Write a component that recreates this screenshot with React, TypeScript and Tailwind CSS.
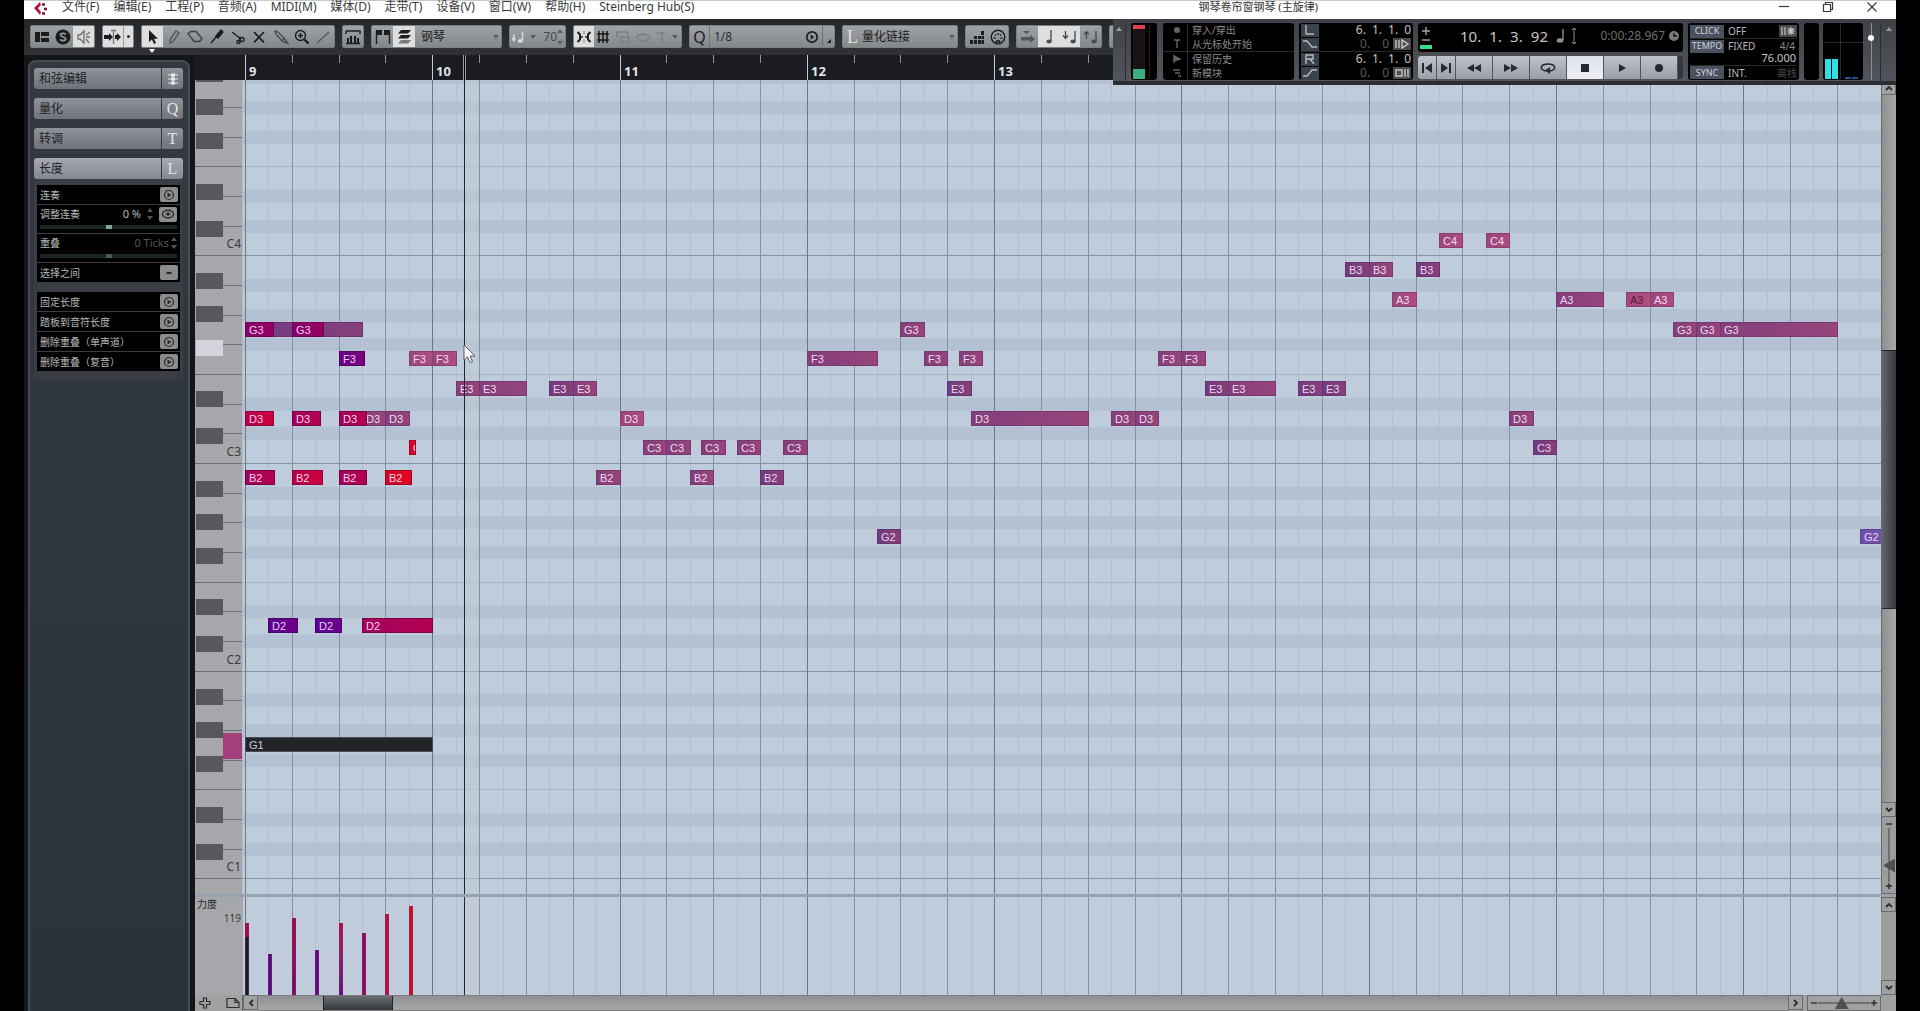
import type { ReactNode } from "react";
import { clsx } from "clsx";

const MENU = [
  "文件(F)",
  "编辑(E)",
  "工程(P)",
  "音频(A)",
  "MIDI(M)",
  "媒体(D)",
  "走带(T)",
  "设备(V)",
  "窗口(W)",
  "帮助(H)",
  "Steinberg Hub(S)",
];

// Horizontal scale: one step is an eighth note, eight steps per bar.
const STEP = 23.41;
const ORIGIN = 2;
const STEPS = 160;

// Bars after this one have no number, the transport panel covers them.
const LAST_LABEL = 13;

// Vertical scale: one row per white key, seven rows per octave.
const ROW = 29.67;
const OCTAVE = ROW * 7;
const ROLL_TOP = -32.4;
const OCTAVES = [0, 1, 2, 3, 4, 5, 6, 7];
const PLAYHEAD = 221;

const stepX = (step: number) => Math.round(ORIGIN + step * STEP);

type Tone =
  | "plum"
  | "mauve"
  | "rose"
  | "muted"
  | "iris"
  | "magenta"
  | "crimson"
  | "wine"
  | "red"
  | "violet"
  | "indigo"
  | "selected";

const TONES: Record<Tone, string> = {
  plum: "from-[#6f3c82] to-[#873f7a] border-[#6b3270] text-[#ead3ea]",
  mauve: "from-[#833f7c] to-[#97447c] border-[#78376d] text-[#f0dbec]",
  rose: "from-[#9a467e] to-[#ad4c80] border-[#8c3f6e] text-[#f4dcea]",
  muted: "from-[#a5487c] to-[#b14f80] border-[#8c3f6e] text-[#5a1c3c]",
  iris: "from-[#6c4fb0] to-[#7a51a8] border-[#5f4192] text-[#e2d8f4]",
  magenta: "from-[#86006c] to-[#960062] border-[#760058] text-[#f2cfe6]",
  crimson: "from-[#b8004c] to-[#cc003c] border-[#93003a] text-[#ffd6e2]",
  wine: "from-[#a2005e] to-[#b40050] border-[#7d0047] text-[#ffd6ea]",
  red: "from-[#d4042c] to-[#e00420] border-[#a80020] text-[#ffd6da]",
  violet: "from-[#66008a] to-[#7a007a] border-[#560068] text-[#eccdf2]",
  indigo: "from-[#5c0090] to-[#6c0086] border-[#4a006e] text-[#e4cdf5]",
  selected: "from-[#22242a] to-[#22242a] border-[#484c56] text-[#c9cbd0]",
};

// [pitch, start step, length in steps, tone]
const NOTES: [string, number, number, Tone][] = [
  ["", 0, 5, "plum"],
  ["G3", 0, 1.2, "magenta"],
  ["G3", 2, 1.33, "magenta"],
  ["F3", 4, 1.07, "violet"],
  ["D3", 0, 1.2, "crimson"],
  ["D3", 2, 1.22, "wine"],
  ["D3", 5, 1, "mauve"],
  ["D3", 6, 1, "mauve"],
  ["D3", 4, 1.17, "wine"],
  ["C3", 7, 0.28, "red"],
  ["B2", 0, 1.23, "wine"],
  ["B2", 2, 1.3, "crimson"],
  ["B2", 4, 1.18, "wine"],
  ["B2", 6, 1.1, "red"],
  ["D2", 1, 1.2, "indigo"],
  ["D2", 3, 1.1, "indigo"],
  ["D2", 5, 3, "wine"],
  ["G1", 0, 8, "selected"],
  ["F3", 7, 1, "rose"],
  ["F3", 8, 1, "rose"],
  ["E3", 9, 1, "mauve"],
  ["E3", 10, 2, "mauve"],
  ["E3", 13, 1, "plum"],
  ["E3", 14, 1, "mauve"],
  ["B2", 15, 1, "mauve"],
  ["D3", 16, 1, "rose"],
  ["C3", 17, 1, "mauve"],
  ["C3", 18, 1, "mauve"],
  ["B2", 19, 1, "mauve"],
  ["C3", 19.5, 1, "mauve"],
  ["C3", 21, 1, "mauve"],
  ["B2", 22, 1, "plum"],
  ["C3", 23, 1, "mauve"],
  ["F3", 24, 3, "mauve"],
  ["G2", 27, 1, "plum"],
  ["G3", 28, 1, "mauve"],
  ["F3", 29, 1, "mauve"],
  ["E3", 30, 1, "plum"],
  ["F3", 30.5, 1, "mauve"],
  ["D3", 31, 5, "mauve"],
  ["D3", 37, 1, "mauve"],
  ["D3", 38, 1, "mauve"],
  ["F3", 39, 1, "mauve"],
  ["F3", 40, 1, "mauve"],
  ["E3", 41, 1, "plum"],
  ["E3", 42, 2, "mauve"],
  ["E3", 45, 1, "plum"],
  ["E3", 46, 1, "plum"],
  ["B3", 47, 1, "plum"],
  ["B3", 48, 1, "mauve"],
  ["A3", 49, 1, "rose"],
  ["B3", 50, 1, "plum"],
  ["C4", 51, 1, "rose"],
  ["C4", 53, 1, "rose"],
  ["D3", 54, 1, "mauve"],
  ["C3", 55, 1, "plum"],
  ["A3", 56, 2, "mauve"],
  ["A3", 59, 1, "muted"],
  ["A3", 60, 1, "rose"],
  ["G3", 61, 1, "mauve"],
  ["G3", 62, 1, "mauve"],
  ["G3", 63, 5, "mauve"],
  ["G2", 69, 1, "iris"],
];

function noteY(pitch: string) {
  const name = pitch ? pitch : "G3";
  const row = "BAGFEDC".indexOf(name[0]) + (4 - Number(name[1])) * 7;
  return Math.round(ROLL_TOP + row * ROW + 7);
}

const VELOCITIES = [
  { step: 0, height: 72, fill: "from-[#b8003f] from-20% to-[#1c1626] to-20%" },
  { step: 1, height: 41, fill: "from-[#62008c] to-[#62008c]" },
  { step: 2, height: 77, fill: "from-[#b2004c] to-[#850068]" },
  { step: 3, height: 45, fill: "from-[#700083] to-[#700083]" },
  { step: 4, height: 72, fill: "from-[#c4003c] to-[#700083]" },
  { step: 5, height: 62, fill: "from-[#a0005a] to-[#a0005a]" },
  { step: 6, height: 81, fill: "from-[#cc0a3e] to-[#cc0a3e]" },
  { step: 7, height: 89, fill: "from-[#e0061c] to-[#e0061c]" },
];

function Icon({ children, className, box = "0 0 16 16" }: { children: ReactNode; className?: string; box?: string }) {
  return (
    <svg
      viewBox={box}
      aria-hidden="true"
      className={clsx("shrink-0", className ?? "size-4")}
      fill="none"
      stroke="currentColor"
      strokeWidth="1.4"
    >
      {children}
    </svg>
  );
}

function Tool({ label, lit, dim, children }: { label: string; lit?: boolean; dim?: boolean; children: ReactNode }) {
  return (
    <button
      type="button"
      aria-label={label}
      className={clsx(
        "flex h-full min-w-0 flex-1 items-center justify-center",
        lit && "bg-[#dcdedf]",
        dim ? "text-[#7c7f81]" : "text-[#1b1c1e]",
      )}
    >
      {children}
    </button>
  );
}

function Group({ className, children }: { className: string; children?: ReactNode }) {
  return (
    <div
      className={clsx(
        "flex h-[23px] shrink-0 items-center overflow-hidden rounded-[2px] border border-[#7d8082] bg-linear-to-b from-[#a0a3a5] to-[#85888a] text-[#1b1c1e]",
        className,
      )}
    >
      {children}
    </div>
  );
}

function Caret({ up, className }: { up?: boolean; className?: string }) {
  return (
    <svg viewBox="0 0 6 4" aria-hidden="true" className={clsx("h-1 w-1.5 shrink-0", className)} fill="currentColor">
      <path d={up ? "M0 4h6L3 0z" : "M0 0h6L3 4z"} />
    </svg>
  );
}

function TitleBar() {
  return (
    <header className="flex h-[19px] shrink-0 items-start border-t border-[#c9c9c9] bg-white pl-[9px] pr-0.5 text-xs leading-4 text-[#3a3a3a]">
      <Icon className="h-4 w-[15px]" box="0 0 15 16">
        <path d="M1 7 7 1 8 4 5 7 8 11 7 14z" fill="#b0183f" stroke="none" />
        <path d="M9 3.5h3M11 8h3M9 12.5h3" stroke="#7c1430" strokeWidth="2.4" />
      </Icon>
      <nav className="-mt-0.5 ml-3.5 flex gap-3.5">
        {MENU.map((item) => (
          <button key={item} type="button" className="whitespace-nowrap">
            {item}
          </button>
        ))}
      </nav>
      <h1 className="-mt-0.5 min-w-0 flex-1 pl-[60px] text-center text-[11px] leading-4 text-[#333]">
        钢琴卷帘窗钢琴 (主旋律)
      </h1>
      <button type="button" aria-label="最小化" className="flex w-11 justify-center">
        <Icon className="size-3" box="0 0 12 12">
          <path d="M1 5.500h10" strokeWidth="1.200" />
        </Icon>
      </button>
      <button type="button" aria-label="还原" className="flex w-11 justify-center">
        <Icon className="size-3" box="0 0 12 12">
          <path d="M1.500 3.500h7v7h-7zM3.500 3.500v-2h7v7h-2" strokeWidth="1.200" />
        </Icon>
      </button>
      <button type="button" aria-label="关闭" className="flex w-11 justify-center">
        <Icon className="size-3" box="0 0 12 12">
          <path d="m1.500 1.500 9 9m0-9-9 9" strokeWidth="1.200" />
        </Icon>
      </button>
    </header>
  );
}

function Toolbar() {
  return (
    <div className="flex h-9 shrink-0 items-start gap-[7px] overflow-hidden bg-linear-to-b from-[#24272a] to-[#303236] pl-1.5 pt-1.5">
      <Group className="w-[65px]">
        <Tool label="窗口布局">
          <Icon className="h-3 w-4" box="0 0 16 12">
            <path d="M1 1h5v10H1zM7 1h8v4H7zM7 7h8v4H7z" fill="currentColor" stroke="none" />
          </Icon>
        </Tool>
        <Tool label="独奏编辑器">
          <Icon>
            <circle cx="8" cy="8" r="7.500" fill="currentColor" stroke="none" />
            <path d="M10.800 5.500C10 4 5.500 3.900 5.500 6.100c0 2.300 5.200 1.400 5.200 3.900 0 2.200-4.900 2.100-5.500.3" stroke="#94979a" strokeWidth="1.700" />
          </Icon>
        </Tool>
        <Tool label="听觉反馈" lit>
          <Icon>
            <path d="M2 6h2l4-4v12L4 10H2zM10 6l4-3M10 8h4M10 10l3 4" stroke="#707376" />
          </Icon>
        </Tool>
      </Group>

      <Group className="w-8">
        <Tool label="自动滚动" lit>
          <Icon className="h-4 w-[18px]" box="0 0 18 16">
            <path d="M0 6h5V4l4 4-4 4v-2H0zM11 6h2V4l4 4-4 4v-2h-2z" fill="currentColor" stroke="none" />
            <path d="M9.500 1v14M7 1.500h5" stroke="#77797c" />
          </Icon>
        </Tool>
        <button type="button" aria-label="滚动选项" className="flex h-full w-2.5 items-center justify-center border-l border-[#9a9c9e] bg-[#dcdedf]">
          <span className="size-[3px] rounded-full bg-[#333]" />
        </button>
      </Group>

      <div className="flex shrink-0 flex-col">
        <Group className="w-[194px]">
          <Tool label="选择" lit>
            <Icon>
              <path d="M4 1v12l3-2.500L9 15l2-1-2-4.200h4z" fill="currentColor" stroke="none" />
            </Icon>
          </Tool>
          <Tool label="绘制">
            <Icon>
              <path d="m4 14 .5-4L10 2l3 2-6 8.500z" stroke="#55585a" />
            </Icon>
          </Tool>
          <Tool label="擦除">
            <Icon>
              <path d="M1 4.500 4 2.500h5l6 7-2.500 3H7z" stroke="#3c3f41" />
            </Icon>
          </Tool>
          <Tool label="修剪">
            <Icon>
              <path d="m2 14 6-7" />
              <path d="m7 7 5-6 2 2-5 6z" fill="currentColor" />
            </Icon>
          </Tool>
          <Tool label="分割">
            <Icon>
              <path d="m2 3 9 7M9 13l1.500-5" />
              <circle cx="12" cy="10.500" r="2" />
              <circle cx="8.500" cy="13" r="1.600" />
            </Icon>
          </Tool>
          <Tool label="静音">
            <Icon>
              <path d="m3 3 10 10.500M13 3 3 13.500" strokeWidth="1.800" />
            </Icon>
          </Tool>
          <Tool label="胶合">
            <Icon>
              <path d="m2 2 3 1 6 6-2 3-6-7zM11 9l4 5.500L9 12" stroke="#4b4e50" />
            </Icon>
          </Tool>
          <Tool label="缩放">
            <Icon>
              <circle cx="6.500" cy="6.500" r="5" />
              <path d="M4 6.500h5M6.500 4v5" />
              <path d="m10.500 10.500 4 4" strokeWidth="2.400" />
            </Icon>
          </Tool>
          <Tool label="线条">
            <Icon>
              <path d="M2 14 14 3" stroke="#55585a" />
            </Icon>
          </Tool>
        </Group>
        <Caret className="ml-2 mt-px text-white" />
      </div>

      <Group className="w-[22px]">
        <Tool label="控制器">
          <Icon>
            <path d="M1 2h14v3" />
            <path d="M1 2v3" />
            <path d="M2 14V9h2v5zM5 14V7h2v7zM9 14V7h2v7zM12 14V9h2v5z" fill="currentColor" stroke="none" />
            <path d="M1 14.500h14" />
          </Icon>
        </Tool>
      </Group>

      <Group className="w-[131px]">
        <button type="button" aria-label="显示片段边界" className="flex h-full w-[21px] items-center justify-center">
          <Icon>
            <path d="M1.500 15V2M14.500 15V2" />
            <path d="M1 1h6v5H1zM9 1h6v5H9z" fill="currentColor" stroke="none" />
          </Icon>
        </button>
        <button type="button" aria-label="编辑激活片段" className="flex h-full w-[22px] items-center justify-center bg-[#dcdedf]">
          <Icon>
            <path d="M5 1h10l-3 3.500H2zM5 6h10l-3 3.500H2z" fill="currentColor" stroke="none" />
            <path d="M5 11h10l-3 3.500H2z" fill="#77797c" stroke="none" />
          </Icon>
        </button>
        <select aria-label="当前片段" className="h-full min-w-0 flex-1 appearance-none pl-1.5 text-xs">
          <option>钢琴</option>
        </select>
        <Caret className="mr-0.5 text-[#5d6062]" />
      </Group>

      <Group className="w-[57px]">
        <Icon className="ml-0.5 h-4 w-3.5">
          <path d="M2 5v6M0 9l2 3 2-3M12 2v10" stroke="#d6d8d9" strokeWidth="1.800" />
          <ellipse cx="9.500" cy="12.500" rx="3" ry="2.200" fill="#d6d8d9" stroke="none" />
        </Icon>
        <Caret className="ml-1 text-[#5d6062]" />
        <input
          aria-label="插入力度"
          defaultValue="70"
          className="h-full w-0 min-w-0 flex-1 text-right text-xs text-[#44474a]"
        />
        <span className="mr-0.5 flex flex-col gap-2 text-[#5d6062]">
          <Caret up />
          <Caret />
        </span>
      </Group>

      <Group className="w-[109px]">
        <Tool label="吸附" lit>
          <Icon>
            <path d="M1.500 3 4 5.500v5L1.500 13M14.500 3 12 5.500v5l2.500 2.500" strokeWidth="2" />
            <path d="M4 8h3M9 8h3" />
            <path d="M8 2v4M8 10v4" stroke="#999" />
          </Icon>
        </Tool>
        <Tool label="网格">
          <Icon>
            <path d="M2 5h12M2 11h12M4 2v12M8 2v12M12 2v12" strokeWidth="1.600" />
          </Icon>
        </Tool>
        <Tool label="事件" dim>
          <Icon>
            <path d="M2 9V3h11v5M6 8h8v5H6z" />
          </Icon>
        </Tool>
        <Tool label="交换" dim>
          <Icon>
            <path d="M1 9c2-5 12-5 14 0M2 9l3 3h6l3-3" />
          </Icon>
        </Tool>
        <Tool label="光标" dim>
          <Icon>
            <path d="M3 4h8M8 4v10" />
          </Icon>
        </Tool>
        <Caret className="mr-[3px] text-[#5d6062]" />
      </Group>

      <Group className="w-[146px]">
        <button type="button" aria-label="应用量化" className="flex h-full w-5 items-center justify-center border-r border-[#6f7274]">
          <span className="text-base leading-5">Q</span>
        </button>
        <select aria-label="量化预置" className="h-full min-w-0 flex-1 appearance-none pl-1 text-xs text-[#2c2e30]">
          <option>1/8</option>
        </select>
        <button type="button" aria-label="迭代量化" className="flex h-full w-5 items-center justify-center">
          <Icon className="size-3.5">
            <circle cx="8" cy="8" r="6" strokeWidth="2" />
            <path d="m6.500 5 4 3-4 3z" fill="currentColor" stroke="none" />
          </Icon>
        </button>
        <span className="flex h-full w-3 items-end justify-center border-l border-[#6f7274] pb-1">
          <Icon className="size-1" box="0 0 4 4">
            <path d="M4 0v4H0z" fill="currentColor" stroke="none" />
          </Icon>
        </span>
      </Group>

      <Group className="w-[116px]">
        <span className="w-[18px] pl-1 font-[Liberation_Serif,serif] text-lg leading-5 text-[#e2e4e5]">L</span>
        <select aria-label="长度量化" className="h-full min-w-0 flex-1 appearance-none pl-px text-xs">
          <option>量化链接</option>
        </select>
        <Caret className="mr-0.5 text-[#5d6062]" />
      </Group>

      <Group className="w-11">
        <Tool label="步进输入">
          <Icon>
            <path d="M1 11h3v4H1zM5 11h3v4H5zM9 11h3v4H9zM5 7h3v3H5zM9 7h3v3H9zM12.500 11H15v4h-2.500zM12.500 7H15v3h-2.500zM12 2h3v4h-3z" fill="currentColor" stroke="none" />
          </Icon>
        </Tool>
        <Tool label="MIDI 输入">
          <Icon>
            <circle cx="8" cy="8" r="6.800" />
            <path d="M3.500 9h2M5 5.500l1 1M8 4v2M11 5.500l-1 1M10.500 9h2M6.500 14v-2h3v2" />
          </Icon>
        </Tool>
      </Group>

      <Group className="w-[86px]">
        <Tool label="移动插入光标">
          <Icon className="size-4 text-[#55585a]">
            <path d="M3 2h7L6.500 5z" fill="currentColor" stroke="none" />
            <path d="M1 8h9V5.500L15 10l-5 4v-2.500H1z" fill="currentColor" stroke="none" />
          </Icon>
        </Tool>
        {["录制音高", "录制音符开力度", "录制音符关力度"].map((label, i) => (
          <Tool key={label} label={label} lit={i < 2}>
            <Icon className="size-4 text-[#4b4e50]">
              {i === 1 && <path d="M3.500 2v7M1 6.500l2.500 3 2.500-3" />}
              {i === 2 && <path d="M3.500 10V3M1 5.500l2.500-3 2.500 3" />}
              <path d={i === 0 ? "M10 1v11" : "M13 2v11"} />
              <ellipse cx={i === 0 ? 8 : 11} cy="12.500" rx="2.600" ry="2" fill="currentColor" stroke="none" />
            </Icon>
          </Tool>
        ))}
      </Group>

      <Group className="w-16" />
    </div>
  );
}

function TransportBox({ className, children }: { className: string; children?: ReactNode }) {
  return <div className={clsx("shrink-0 rounded-[3px] bg-black", className)}>{children}</div>;
}

function ModeRow({ text, children }: { text: string; children: ReactNode }) {
  return (
    <button type="button" className="flex h-3.5 items-center text-[10px] leading-3.5 text-[#8b8b8b]">
      <Icon className="mx-1 size-3 text-[#666]" box="0 0 12 12">
        {children}
      </Icon>
      <span className="border-l border-[#2a2a2a] pl-1">{text}</span>
    </button>
  );
}

function Locator({ label, values, dim, icon, children }: { label: string; values: string[]; dim?: boolean; icon?: ReactNode; children: ReactNode }) {
  return (
    <div className="flex h-3.5 items-center">
      <button type="button" aria-label={label} className="flex h-[13px] w-[18px] items-center justify-center bg-[#3b424c] text-[#b3bac2]">
        {children}
      </button>
      <div
        className={clsx(
          "ml-auto flex justify-end text-xs leading-3.5",
          dim ? "gap-3 text-[#5c5c5c]" : "gap-1.5 text-[#c4c4c4]",
        )}
      >
        {values.map((value, i) => (
          <span key={i}>{value}</span>
        ))}
      </div>
      {icon}
    </div>
  );
}

function PrerollToggle({ label, d }: { label: string; d: string }) {
  return (
    <button
      type="button"
      aria-label={label}
      className="ml-1 flex h-3 w-[18px] shrink-0 items-center justify-center bg-[#4a4a4e] text-[#c8c8c8]"
    >
      <Icon className="h-2.5 w-4" box="0 0 16 10">
        <path d={d} />
      </Icon>
    </button>
  );
}

function TransportButton({ label, wide, lit, children }: { label: string; wide?: boolean; lit?: boolean; children: ReactNode }) {
  return (
    <button
      type="button"
      aria-label={label}
      className={clsx(
        "flex h-[23px] items-center justify-center border-r border-[#50555c] bg-linear-to-b text-[#26292f]",
        wide ? "w-[37px]" : "w-[19px]",
        lit ? "from-[#dfe2ea] to-[#eef0f6]" : "from-[#bfc3ca] to-[#9a9fa8]",
      )}
    >
      {children}
    </button>
  );
}

function TransportPanel() {
  const tag = "flex h-[13px] w-[34px] items-center justify-center bg-[#4b5160] text-[9px] leading-3 text-[#d0d3da]";
  return (
    <section
      aria-label="走带面板"
      className="absolute right-0 top-[19px] flex h-[66px] w-[783px] items-start border-b-4 border-[#2b2f33] bg-linear-to-b from-[#3e4145] to-[#52565c] pt-1"
    >
      <div className="flex h-[58px] w-[13px] justify-center border-r border-[#2a2c2f] pt-1">
        <Caret up className="text-[#9a9ea3]" />
      </div>

      <TransportBox className="ml-[5px] flex h-[57px] w-[26px] items-stretch gap-1 px-0.5 pb-px pt-0.5">
        <div className="flex w-3 flex-col justify-between bg-[#191313]">
          <span className="h-1 bg-[#e0404c]" />
          <span className="h-2.5 bg-[#3cae80]" />
        </div>
        <span className="w-px bg-[#222]" />
      </TransportBox>

      <TransportBox className="ml-1.5 flex h-[57px] w-[131px] flex-col">
        <div className="flex flex-col border-b border-[#2a2a2a] px-1">
          <ModeRow text="穿入/穿出">
            <circle cx="6" cy="6" r="3" fill="currentColor" stroke="none" />
          </ModeRow>
          <ModeRow text="从光标处开始">
            <path d="M3 2h6M6 2v8" />
          </ModeRow>
        </div>
        <div className="flex flex-col px-1">
          <ModeRow text="保留历史">
            <path d="M3 2v8M3 3l6 3-6 2z" fill="currentColor" />
          </ModeRow>
          <ModeRow text="新模块">
            <path d="M2 3h7M4 6h5M7 9h3" />
          </ModeRow>
        </div>
      </TransportBox>

      <TransportBox className="ml-[5px] flex h-[57px] w-[114px] flex-col px-0.5">
        <Locator label="左定位点" values={["6.", "1.", "1.", "0"]}>
          <Icon className="h-2.5 w-3" box="0 0 12 10">
            <path d="M2 0v9h8" />
          </Icon>
        </Locator>
        <Locator label="预卷" values={["0.", "0"]} dim icon={<PrerollToggle label="使用预卷" d="M2 1v8M5 1v8M8 1l6 4-6 4z" />}>
          <Icon className="h-2.5 w-3.5" box="0 0 14 10">
            <path d="M0 2h4l5 6h5" />
          </Icon>
        </Locator>
        <div className="border-t border-[#2a2a2a]">
          <Locator label="右定位点" values={["6.", "1.", "1.", "0"]}>
            <Icon className="h-2.5 w-3" box="0 0 12 10">
              <path d="M2 10V1h7v4H2M6 5l4 5" />
            </Icon>
          </Locator>
          <Locator label="后卷" values={["0.", "0"]} dim icon={<PrerollToggle label="使用后卷" d="M2 2h6v6H2zM11 1v8M14 1v8" />}>
            <Icon className="h-2.5 w-3.5" box="0 0 14 10">
              <path d="M0 8h4l5-6h5" />
            </Icon>
          </Locator>
        </div>
      </TransportBox>

      <div className="ml-[5px] w-[265px] shrink-0">
        <div className="flex h-[29px] items-center rounded-[3px] bg-black pl-0.5 pr-1 text-[#c6c6c6]">
          <div className="flex w-3 flex-col items-center gap-px text-[#a5a5a5]">
            <Icon className="size-2" box="0 0 8 8">
              <path d="M0 4h8M4 0v8" />
            </Icon>
            <Icon className="size-2" box="0 0 8 8">
              <path d="M0 4h8" />
            </Icon>
            <span className="h-1 w-3 bg-[#35dd8e]" />
          </div>
          <div className="-mt-1 ml-7 flex w-[88px] justify-between text-[15px] leading-5">
            <span>10.</span>
            <span>1.</span>
            <span>3.</span>
            <span>92</span>
          </div>
          <Icon className="-mt-1 ml-1.5 h-4 w-3 text-[#8f8f8f]" box="0 0 12 16">
            <path d="M9 1v11" />
            <ellipse cx="6" cy="12.500" rx="3.300" ry="2.200" fill="currentColor" stroke="none" />
          </Icon>
          <Icon className="-mt-1 ml-1 h-[18px] w-2 text-[#8f8f8f]" box="0 0 8 18">
            <path d="M4 2v14M2 3l2-2 2 2M2 15l2 2 2-2" strokeWidth="1" />
          </Icon>
          <span className="-mt-1 ml-auto text-xs leading-4 text-[#6e6e6e]">0:00:28.967</span>
          <Icon className="-mt-1 ml-1 size-2.5 text-[#7c7c7c]" box="0 0 10 10">
            <circle cx="5" cy="5" r="5" fill="currentColor" stroke="none" />
            <path d="M5 2v3h3" stroke="#111" />
          </Icon>
        </div>
        <div className="mt-1 flex overflow-hidden rounded-[3px] bg-[#33373d]">
          <TransportButton label="到开头">
            <Icon className="h-3 w-3.5" box="0 0 14 12">
              <path d="M3 1v10" strokeWidth="2" />
              <path d="M12 1v10L5 6z" fill="currentColor" stroke="none" />
            </Icon>
          </TransportButton>
          <TransportButton label="到结尾">
            <Icon className="h-3 w-3.5" box="0 0 14 12">
              <path d="M11 1v10" strokeWidth="2" />
              <path d="M2 1v10l7-5z" fill="currentColor" stroke="none" />
            </Icon>
          </TransportButton>
          <TransportButton label="后退" wide>
            <Icon className="h-3 w-4" box="0 0 16 12">
              <path d="M8 2v8L1 6zM15 2v8L8 6z" fill="currentColor" stroke="none" />
            </Icon>
          </TransportButton>
          <TransportButton label="前进" wide>
            <Icon className="h-3 w-4" box="0 0 16 12">
              <path d="M1 2v8l7-4zM8 2v8l7-4z" fill="currentColor" stroke="none" />
            </Icon>
          </TransportButton>
          <TransportButton label="循环" wide>
            <Icon className="h-3 w-4" box="0 0 16 12">
              <path d="M6 9C-1 8 0 2 8 2s9 6 2 7" strokeWidth="1.600" />
              <path d="m10 5-5 3.500L10 12z" fill="currentColor" stroke="none" />
            </Icon>
          </TransportButton>
          <TransportButton label="停止" wide lit>
            <span className="size-2 bg-[#26292f]" />
          </TransportButton>
          <TransportButton label="播放" wide>
            <Icon className="h-3 w-2" box="0 0 8 12">
              <path d="M1 2v8l7-4z" fill="currentColor" stroke="none" />
            </Icon>
          </TransportButton>
          <TransportButton label="录音" wide>
            <span className="size-2 rounded-full bg-[#26292f]" />
          </TransportButton>
        </div>
      </div>

      <TransportBox className="ml-[5px] flex h-[57px] w-[111px] flex-col px-0.5 pb-px pt-px text-[10px] leading-3.5 text-[#b9b9b9]">
        <div className="flex h-4 items-center border-b border-[#2a2a2a]">
          <button type="button" className={tag}>
            CLICK
          </button>
          <span className="ml-1">OFF</span>
          <span className="ml-auto flex h-3 w-[18px] items-center justify-center bg-[#4a4a4e] text-[#c8c8c8]">
            <Icon className="h-2.5 w-4" box="0 0 16 10">
              <path d="M2 1v8M5 1v8M11 1v8M7 5h8M8 2l6 6M14 2 8 8" strokeWidth="1.200" />
            </Icon>
          </span>
        </div>
        <div className="flex h-3.5 items-center">
          <button type="button" className={tag}>
            TEMPO
          </button>
          <span className="ml-1">FIXED</span>
          <span className="ml-auto pr-0.5 text-[#8a8a8a]">4/4</span>
        </div>
        <p className="-mt-0.5 pr-px text-right text-[11px] leading-3.5 text-[#c9c9c9]">76.000</p>
        <div className="mt-auto flex h-3.5 items-center border-t border-[#2a2a2a]">
          <button type="button" className={tag}>
            SYNC
          </button>
          <span className="ml-1">INT.</span>
          <span className="ml-auto text-[#4a4a4a]">离线</span>
        </div>
      </TransportBox>

      <TransportBox className="ml-[5px] h-[57px] w-[15px]" />
      <TransportBox className="ml-1 flex h-[57px] w-10 items-end justify-center gap-1 bg-[linear-gradient(transparent_19px,#2c2c2c_19px,#2c2c2c_20px,transparent_20px)] pb-px">
        <div className="flex h-full w-4 items-end gap-px border-r border-[#2c2c2c]">
          <span className="h-5 w-1.5 bg-[#2be0e6]" />
          <span className="h-5 w-1.5 bg-[#2be0e6]" />
        </div>
        <div className="flex w-4 items-end gap-px">
          <span className="h-0.5 w-1.5 bg-[#1c4f96]" />
          <span className="h-0.5 w-1.5 bg-[#1c4f96]" />
        </div>
      </TransportBox>
      <div className="ml-1 flex h-[57px] w-2 flex-col items-center">
        <span className="h-3 w-px bg-[#8d9196]" />
        <span className="size-1.5 rounded-full bg-white" />
        <span className="w-px flex-1 bg-[#8d9196]" />
      </div>
      <div className="ml-auto flex h-[58px] w-4 justify-center border-l border-[#2a2c2f] pt-1">
        <Caret up className="text-[#9a9ea3]" />
      </div>
    </section>
  );
}

function SectionHeader({ title, glyph, open }: { title: string; glyph: ReactNode; open?: boolean }) {
  return (
    <button
      type="button"
      aria-expanded={Boolean(open)}
      className={clsx(
        "flex h-[21px] w-full items-center overflow-hidden rounded-[3px] bg-linear-to-b text-xs leading-5 text-[#202225]",
        open ? "from-[#a6a8b2] to-[#858791]" : "from-[#8f9399] to-[#70747a]",
      )}
    >
      <span className="flex-1 pl-[5px] text-left">{title}</span>
      <span className="flex h-full w-[22px] items-center justify-center border-l border-[#35383c] font-[Liberation_Serif,serif] text-base leading-5 text-[#e4e6e8]">
        {glyph}
      </span>
    </button>
  );
}

function RowButton({ label, kind }: { label: string; kind: "play" | "bypass" | "menu" }) {
  return (
    <button type="button" aria-label={label} className="flex h-[15px] w-[18px] shrink-0 items-center justify-center rounded-[2px] bg-[#8b8c8e] text-[#2a2b2d]">
      <Icon className="h-3 w-3.5" box="0 0 14 12">
        {kind === "play" && (
          <>
            <circle cx="7" cy="6" r="4.500" strokeWidth="1.200" />
            <path d="m5.500 3.500 4 2.500-4 2.500z" fill="currentColor" stroke="none" />
          </>
        )}
        {kind === "bypass" && (
          <>
            <ellipse cx="7" cy="6" rx="5.500" ry="3.800" />
            <path d="M4.500 6h5M7 4v4" />
          </>
        )}
        {kind === "menu" && <path d="M4.500 6h5" strokeWidth="2.200" />}
      </Icon>
    </button>
  );
}

function InspectorSlider({ label, value, off }: { label: string; value: string; off?: boolean }) {
  return (
    <div className="flex h-7 flex-col justify-between bg-black px-[3px] pb-1 pt-px">
      <div className="flex h-4 items-center">
        <label htmlFor={label} className="flex-1">
          {label}
        </label>
        <span className={clsx("text-[11px]", off && "text-[#555]")}>{value}</span>
        <span className={clsx("flex flex-col gap-1 text-[#555]", off ? "ml-0.5" : "mx-1.5")}>
          <Caret up />
          <Caret />
        </span>
        {!off && <RowButton label={label} kind="bypass" />}
      </div>
      <input
        id={label}
        type="range"
        defaultValue={50}
        className={clsx(
          "h-1 w-full appearance-none bg-[#1c2425] [&::-webkit-slider-thumb]:h-1 [&::-webkit-slider-thumb]:w-1.5 [&::-webkit-slider-thumb]:appearance-none",
          off ? "[&::-webkit-slider-thumb]:bg-[#4a5a5a]" : "[&::-webkit-slider-thumb]:bg-[#7fa89f]",
        )}
      />
    </div>
  );
}

function ActionRow({ label, kind = "play" }: { label: string; kind?: "play" | "menu" }) {
  return (
    <div className="flex h-[19px] items-center justify-between bg-black pl-[3px] pr-0.5">
      <span>{label}</span>
      <RowButton label={label} kind={kind} />
    </div>
  );
}

function Inspector() {
  return (
    <aside className="flex w-[171px] shrink-0 bg-[#14161a] pl-1 pr-[5px] pt-[5px]">
      <div className="flex-1 rounded-t-lg border-x-2 border-t-2 border-[#434d53] bg-linear-to-b from-[#34393f] to-[#29333a] pl-1 pr-[5px] pt-1.5">
        <div className="flex flex-col gap-[9px]">
          <SectionHeader
            title="和弦编辑"
            glyph={
              <Icon className="h-3.5 w-3" box="0 0 12 14">
                <path d="M1 3h10M1 7h10M1 11h10M6 1v12" strokeWidth="1.200" />
                <path d="M4 3h4M4 7h4M4 11h4" strokeWidth="3" />
              </Icon>
            }
          />
          <SectionHeader title="量化" glyph="Q" />
          <SectionHeader title="转调" glyph="T" />
          <SectionHeader title="长度" glyph="L" open />
        </div>
        <div className="bg-[#3b3d44] px-[3px] pb-2 pt-1.5 text-[10px] leading-3.5 text-[#b8b8b8]">
          <div className="flex flex-col gap-px">
            <ActionRow label="连奏" />
            <InspectorSlider label="调整连奏" value="0 %" />
            <InspectorSlider label="重叠" value="0 Ticks" off />
            <ActionRow label="选择之间" kind="menu" />
          </div>
          <div className="mt-2.5 flex flex-col gap-px">
            <ActionRow label="固定长度" />
            <ActionRow label="踏板到音符长度" />
            <ActionRow label="删除重叠（单声道）" />
            <ActionRow label="删除重叠（复音）" />
          </div>
        </div>
      </div>
    </aside>
  );
}

function Ruler() {
  return (
    <div className="flex h-[25px] shrink-0 bg-[#1b1c22]">
      <div className="w-12 shrink-0" />
      <div className="relative flex-1 overflow-hidden">
        {Array.from({ length: STEPS / 2 }, (_, beat) => {
          const bar = 9 + beat / 4;
          return (
            <div
              key={beat}
              className={clsx("absolute top-0 border-l", beat % 4 === 0 ? "h-full border-[#c8cacd]" : "h-2 border-[#8e9196]")}
              style={{ left: stepX(beat * 2) }}
            >
              {beat % 4 === 0 && bar <= LAST_LABEL && (
                <span className="block pl-[3px] pt-2 text-[13px] font-bold leading-4 text-[#e3e4e6]">{bar}</span>
              )}
            </div>
          );
        })}
        <div className="absolute top-0 h-full w-[3px] border-x border-[#9a9ca0] bg-black" style={{ left: PLAYHEAD - 1 }} />
      </div>
    </div>
  );
}

// Black keys sit at uneven offsets inside the octave.
const BLACK_KEYS = [18, 51, 85, 136, 173];

function Keyboard() {
  return (
    <svg aria-label="键盘" className="h-full w-12 shrink-0 bg-[#a6a7ab]" shapeRendering="crispEdges">
      {OCTAVES.map((octave) => {
        const top = ROLL_TOP + octave * OCTAVE;
        return (
          <g key={octave}>
            {[1, 2, 3, 4, 5, 6, 7].map((row) => (
              <rect
                key={row}
                x={row === 4 || row === 7 ? 0 : 28}
                y={Math.round(top + row * ROW)}
                width="48"
                height="1"
                fill="#6c6e72"
              />
            ))}
            {BLACK_KEYS.map((y, i) => (
              <rect
                key={y}
                x="1"
                y={Math.round(top + y)}
                width="27"
                height="16"
                fill={octave === 1 && i === 2 ? "#d4d5dc" : "#56585c"}
              />
            ))}
            {octave < 4 && (
              <text x="46" y={Math.round(top + OCTAVE - 7)} textAnchor="end" className="fill-[#3b3c40] text-xs">
                {`C${4 - octave}`}
              </text>
            )}
          </g>
        );
      })}
      <rect x="28" y="653" width="20" height="26" fill="#a3407c" />
      <rect x="47" y="0" width="1" height="100%" fill="#b9bcc4" />
    </svg>
  );
}

function GridLines({ rows }: { rows?: boolean }) {
  return (
    <svg aria-hidden="true" className="absolute inset-0 size-full" shapeRendering="crispEdges">
      {Array.from({ length: STEPS / 2 }, (_, i) => (
        <rect key={i} x={stepX(i * 2 + 1)} y="0" width="1" height="100%" fill="#b1bdce" />
      ))}
      {rows &&
        OCTAVES.map((octave) => {
          const top = ROLL_TOP + octave * OCTAVE;
          return (
            <g key={octave}>
              {[1, 2, 3, 5, 6].map((row) => (
                <rect key={row} x="0" y={Math.round(top + row * ROW - 6)} width="100%" height="13" fill="#b4c1d2" />
              ))}
              <rect x="0" y={Math.round(top + 4 * ROW)} width="100%" height="1" fill="#a9b6c7" />
              <rect x="0" y={Math.round(top + 7 * ROW)} width="100%" height="1" fill="#8494a6" />
            </g>
          );
        })}
      {Array.from({ length: STEPS / 2 }, (_, beat) => (
        <rect
          key={beat}
          x={stepX(beat * 2)}
          y="0"
          width="1"
          height="100%"
          fill={beat % 4 === 0 ? "#66788c" : "#8292a4"}
        />
      ))}
    </svg>
  );
}

function PlayheadTrail() {
  return <div className="absolute top-0 h-full w-3.5 bg-[#c0ccd0]/50" style={{ left: PLAYHEAD }} />;
}

function Playhead() {
  return <div className="absolute top-0 h-full border-l border-[#22272c]" style={{ left: PLAYHEAD }} />;
}

function NoteGrid() {
  return (
    <div className="relative min-w-0 flex-1 overflow-hidden bg-[#bfccdc]">
      <GridLines rows />
      <PlayheadTrail />
      {NOTES.map(([pitch, start, length, tone], i) => (
        <div
          key={i}
          className={clsx(
            "absolute flex h-[15px] items-center overflow-hidden border bg-linear-to-r pl-[3px] font-[Liberation_Sans,sans-serif] text-[11px] leading-3",
            TONES[tone],
          )}
          style={{
            left: stepX(start),
            top: noteY(pitch),
            width: stepX(start + length) - stepX(start) + 1,
          }}
        >
          {pitch}
        </div>
      ))}
      <Playhead />
      <svg viewBox="0 0 14 20" aria-hidden="true" className="absolute left-[220px] top-[264px] h-5 w-3.5">
        <path d="M1 1v15l3.500-3.200L7 18.500l2.500-1L7 12h5z" fill="#fff" stroke="#555a63" />
      </svg>
    </div>
  );
}

function ArrowButton({ label, d }: { label: string; d: string }) {
  return (
    <button
      type="button"
      aria-label={label}
      className="flex size-[15px] shrink-0 items-center justify-center border border-[#6a6b6d] bg-[#a0a1a3] text-[#2c2d30]"
    >
      <Icon className="size-2" box="0 0 8 8">
        <path d={d} strokeWidth="1.800" />
      </Icon>
    </button>
  );
}

function RollScrollbar() {
  return (
    <div className="flex w-[15px] shrink-0 flex-col bg-[#9c9d9f]">
      <ArrowButton label="向上滚动" d="m1 6 3-3 3 3" />
      <div className="flex min-h-0 flex-1 flex-col border-l border-[#6a6b6d] bg-linear-to-r from-[#8f9092] to-[#a6a7a8]">
        <div className="flex-[255]" />
        <div className="flex-[257] border-y border-[#222] bg-linear-to-r from-[#62656a] to-[#36393e]" />
        <div className="flex-[193]" />
      </div>
      <ArrowButton label="向下滚动" d="m1 2 3 3 3-3" />
      <div className="flex h-[77px] flex-col items-center justify-between border-b border-l border-[#6a6b6d] py-1 text-[#2c2d30]">
        <Icon className="size-1.5" box="0 0 6 6">
          <path d="M0 3h6" />
        </Icon>
        <input
          type="range"
          aria-label="垂直缩放"
          defaultValue={76}
          className="h-[54px] w-3 appearance-none bg-[linear-gradient(90deg,transparent_5px,#6f7072_5px,#6f7072_7px,transparent_7px)] [writing-mode:vertical-lr] [&::-webkit-slider-thumb]:h-3.5 [&::-webkit-slider-thumb]:w-3 [&::-webkit-slider-thumb]:appearance-none [&::-webkit-slider-thumb]:bg-[#4c4e51] [&::-webkit-slider-thumb]:[clip-path:polygon(0_50%,100%_0,100%_100%)]"
        />
        <Icon className="size-1.5" box="0 0 6 6">
          <path d="M0 3h6M3 0v6" />
        </Icon>
      </div>
    </div>
  );
}

function VelocityLane() {
  return (
    <div className="flex h-[98px] shrink-0">
      <div className="w-12 shrink-0 bg-[#a6a7ab] px-0.5 text-[10px] leading-3.5">
        <p className="text-[#232427]">力度</p>
        <p className="text-right text-[#3b3c40]">119</p>
      </div>
      <div className="relative min-w-0 flex-1 overflow-hidden bg-[#c0cbdc]">
        <GridLines />
        <PlayheadTrail />
        {VELOCITIES.map(({ step, height, fill }) => (
          <div
            key={step}
            className={clsx("absolute bottom-0 w-1 border-x border-[#5a3a66]/60 bg-linear-to-b", fill)}
            style={{ left: stepX(step), height }}
          />
        ))}
        <Playhead />
      </div>
      <div className="flex w-[15px] flex-col justify-between bg-[#9c9d9f]">
        <ArrowButton label="向上" d="m1 6 3-3 3 3" />
        <ArrowButton label="向下" d="m1 2 3 3 3-3" />
      </div>
    </div>
  );
}

function BottomBar() {
  return (
    <div className="flex h-4 shrink-0 bg-[#a0a1a3]">
      <div className="flex w-12 shrink-0 items-center justify-between border-r border-[#6a6b6d] pl-1 pr-0.5 text-[#2c2d30]">
        <button type="button" aria-label="添加控制器轨">
          <Icon className="size-3" box="0 0 12 12">
            <path d="M4.500 1h3v3.500H11v3H7.500V11h-3V7.500H1v-3h3.500z" strokeWidth="1.200" />
          </Icon>
        </button>
        <button type="button" aria-label="控制器预置">
          <Icon className="h-3 w-3.5" box="0 0 14 12">
            <path d="M1 1.500h8l4 4v5H1zM9 1.500v4h4" strokeWidth="1.200" />
          </Icon>
        </button>
      </div>
      <ArrowButton label="向左滚动" d="M6 1 3 4l3 3" />
      <div className="flex min-w-0 flex-1 border-y border-[#7b7c7e] bg-linear-to-b from-[#8f9092] to-[#a6a7a8]">
        <div className="w-[65px]" />
        <div className="w-[70px] border-x border-[#222] bg-linear-to-b from-[#6a6d72] to-[#34373c]" />
      </div>
      <ArrowButton label="向右滚动" d="m2 1 3 3-3 3" />
      <div className="ml-1 flex w-[74px] items-center justify-between border border-[#6a6b6d] px-[3px] text-[#2c2d30]">
        <Icon className="size-1.5" box="0 0 6 6">
          <path d="M0 3h6" />
        </Icon>
        <input
          type="range"
          aria-label="水平缩放"
          defaultValue={44}
          className="h-3 w-[52px] appearance-none bg-[linear-gradient(transparent_5px,#6f7072_5px,#6f7072_7px,transparent_7px)] [&::-webkit-slider-thumb]:h-3 [&::-webkit-slider-thumb]:w-3.5 [&::-webkit-slider-thumb]:appearance-none [&::-webkit-slider-thumb]:bg-[#4c4e51] [&::-webkit-slider-thumb]:[clip-path:polygon(50%_0,100%_100%,0_100%)]"
        />
        <Icon className="size-1.5" box="0 0 6 6">
          <path d="M0 3h6M3 0v6" />
        </Icon>
      </div>
      <div className="w-[15px]" />
    </div>
  );
}

export default function App() {
  return (
    <div className="flex h-screen bg-black px-6 font-['Noto_Sans','Noto_Sans_CJK_SC',sans-serif]">
      <div className="relative flex min-w-0 flex-1 flex-col overflow-hidden">
        <TitleBar />
        <Toolbar />
        <div className="flex min-h-0 flex-1">
          <Inspector />
          <main className="flex min-w-0 flex-1 flex-col">
            <Ruler />
            <div className="flex min-h-0 flex-1">
              <Keyboard />
              <NoteGrid />
              <RollScrollbar />
            </div>
            <div className="h-[3px] shrink-0 bg-[#97a3b0]" />
            <VelocityLane />
            <BottomBar />
          </main>
        </div>
        <TransportPanel />
      </div>
    </div>
  );
}
